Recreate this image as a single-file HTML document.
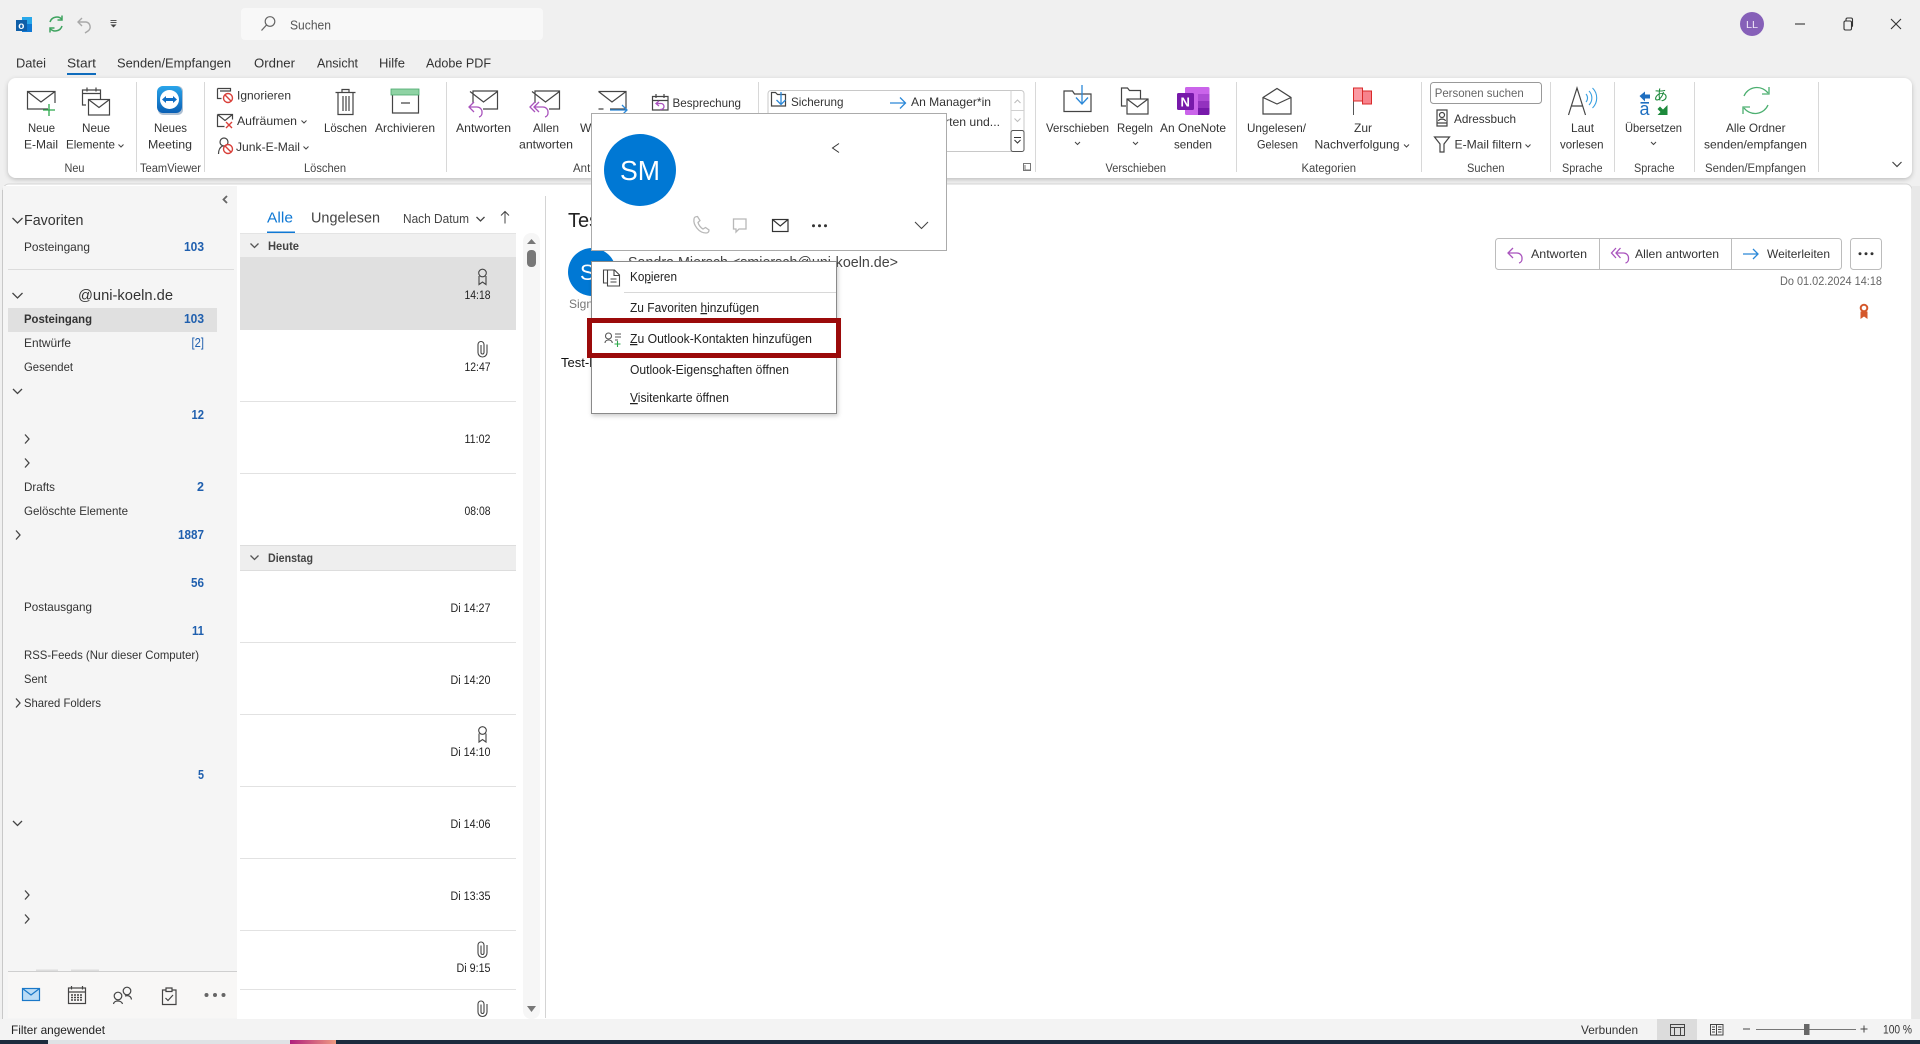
<!DOCTYPE html>
<html lang="de"><head><meta charset="utf-8"><title>Outlook</title>
<style>
html,body{margin:0;padding:0;width:1920px;height:1044px;overflow:hidden;background:#f0f0f0}
svg{display:block;font-family:"Liberation Sans","Noto Sans CJK JP",sans-serif;font-size:12px;fill:#333}
.i{fill:none;stroke:#444;stroke-width:1.2}
.b{fill:#1f5fae;font-weight:bold;font-size:12.5px}
.t{fill:#222;font-size:11.5px}
.h{fill:#444;font-weight:bold;font-size:12px}
.m{fill:#222;font-size:12.5px}
</style></head><body>
<svg xmlns="http://www.w3.org/2000/svg" width="1920" height="1044" viewBox="0 0 1920 1044">
<defs>
<linearGradient id="tv" x1="0" y1="0" x2="0" y2="1"><stop offset="0" stop-color="#2aa5ea"/><stop offset="1" stop-color="#0a5fb4"/></linearGradient>
<linearGradient id="pk" x1="0" y1="0" x2="1" y2="0"><stop offset="0" stop-color="#b0207e"/><stop offset="1" stop-color="#ef9a80"/></linearGradient>
<filter id="sh" x="-5%" y="-10%" width="110%" height="125%"><feDropShadow dx="0" dy="1.5" stdDeviation="2.5" flood-color="#000" flood-opacity=".22"/></filter>
<filter id="sm" x="-5%" y="-5%" width="110%" height="110%"><feDropShadow dx="1" dy="2" stdDeviation="2" flood-color="#000" flood-opacity=".2"/></filter>
</defs>

<!-- title bar -->
<rect x="22" y="17" width="10" height="15" fill="#28a8ea"/><rect x="22" y="24" width="10" height="8" fill="#0f78d4"/>
<rect x="16" y="20" width="11" height="11" fill="#0f5fa8"/><text x="18.3" y="29" style="font-size:10px;font-weight:bold;fill:#fff">o</text>
<g fill="none" stroke="#3ea35f" stroke-width="1.5"><path d="M50 22a7 7 0 0 1 12-2.5"/><path d="M62 26a7 7 0 0 1-12 2.5"/><path d="M62 15.5v4.5h-4.5"/><path d="M50 32.500v-4.500h4.500"/></g>
<g fill="none" stroke="#a8a8a8" stroke-width="1.4"><path d="M82 18l-4 4 4 4"/><path d="M78 22h8a5 5 0 0 1 2 9l-3 2"/></g>
<path d="M110.500 20.500h6M110.500 22.500h6" stroke="#555" stroke-width="1" fill="none"/><path d="M110.500 24.500l3 3 3-3z" fill="#444"/>
<rect x="241" y="8" width="302" height="32" rx="4" fill="#f8f8f8"/>
<circle cx="270" cy="21.500" r="4.800" fill="none" stroke="#666" stroke-width="1.200"/><path d="M266.500 25l-5 5.500" stroke="#666" stroke-width="1.300"/>
<text x="290" y="29.500" textLength="41" lengthAdjust="spacingAndGlyphs" style="font-size:12.5px;fill:#555">Suchen</text>
<circle cx="1752" cy="24" r="12" fill="#8660b8"/><text x="1746" y="28" textLength="12" lengthAdjust="spacingAndGlyphs" style="font-size:10px;fill:#f0e8f8">LL</text>
<path d="M1795 24h10" stroke="#333" stroke-width="1.100"/>
<g fill="none" stroke="#333" stroke-width="1.100"><rect x="1844" y="21" width="7.500" height="9" rx="1.500"/><path d="M1846 21v-1.500a1.500 1.500 0 0 1 1.500-1.500h3.500a1.500 1.500 0 0 1 1.500 1.500v6.500a1.500 1.500 0 0 1-1.500 1"/></g>
<path d="M1891 19l10 10M1901 19l-10 10" stroke="#333" stroke-width="1.100"/>

<!-- tabs -->
<g style="font-size:13px;fill:#333">
<text x="16" y="67.500" textLength="30" lengthAdjust="spacingAndGlyphs">Datei</text>
<text x="67" y="67.500" textLength="29" lengthAdjust="spacingAndGlyphs">Start</text>
<text x="117" y="67.500" textLength="114" lengthAdjust="spacingAndGlyphs">Senden/Empfangen</text>
<text x="254" y="67.500" textLength="41" lengthAdjust="spacingAndGlyphs">Ordner</text>
<text x="317" y="67.500" textLength="41" lengthAdjust="spacingAndGlyphs">Ansicht</text>
<text x="379" y="67.500" textLength="26" lengthAdjust="spacingAndGlyphs">Hilfe</text>
<text x="426" y="67.500" textLength="65" lengthAdjust="spacingAndGlyphs">Adobe PDF</text>
</g>
<rect x="67" y="73" width="29" height="2" fill="#0f6cbd"/>

<!-- main panel -->
<rect x="3" y="184" width="1909" height="860" rx="6" fill="#fff" stroke="#d6d6d6"/>
<rect x="3" y="186" width="234" height="833" fill="#f5f5f5"/>
<rect x="2" y="190" width="1" height="830" fill="#c8c8c8"/>
<rect x="237" y="186" width="3" height="833" fill="#fff"/>

<!-- ribbon -->
<rect x="8" y="78" width="1904" height="100" rx="8" fill="#fff" filter="url(#sh)"/>
<g fill="#d8d8d8">
<rect x="136" y="82" width="1" height="90"/><rect x="204" y="82" width="1" height="90"/><rect x="446" y="82" width="1" height="90"/><rect x="758" y="82" width="1" height="90"/><rect x="1035" y="82" width="1" height="90"/><rect x="1236" y="82" width="1" height="90"/><rect x="1421" y="82" width="1" height="90"/><rect x="1550" y="82" width="1" height="90"/><rect x="1614" y="82" width="1" height="90"/><rect x="1694" y="82" width="1" height="90"/><rect x="1818" y="82" width="1" height="90"/>
</g>

<!-- ribbon icons -->
<g class="i">
<path d="M48 109H27.500V91.500H55V103M27.500 91.500L41 102l14-10.500"/>
<path d="M86 105h-3.500V90h18v9M82.500 93.500h18M87 87.500v4M96 87.500v4"/>
<rect x="88.500" y="99.500" width="21" height="15.500" fill="#fff"/><path d="M88.500 99.500l10.500 8 10.500-8"/>
<path d="M338 92.500v22h15v-22M335.500 92.500h20M342 92.500v-3h7v3M343 96v15M346 96v15M349 96v15"/>
<path d="M392.500 95v18h26V95M401 103h9"/>
<path d="M473 103v-12H497.500v18H483M470 91.500l13.500 10.500 14-10.500" />
<path d="M535 103v-12H559.500v18H549M532 91.500l13.500 10.500 14-10.500" />
<path d="M598.500 91.500H626V109H610M598.500 109h5M598.500 91.500L612 102l14-10.500"/>
<path d="M652.500 96.500h15.500v13.500h-15.500zM652.500 100.500h15.500M656 94v4M664 94v4"/>
<path d="M217.500 88.500h13v3M217.500 88.500v10h4M220 91h10.500"/>
<path d="M217.500 114.500h15v5M217.500 114.500v12h7M217.500 114.500l7.500 6 7.500-6"/>
<circle cx="224" cy="142" r="4"/><path d="M218.500 154c0-5 2-7 4-8"/>
<path d="M771.500 92.500h4l2 2h8V106H771.500z" />
<path d="M1064.500 91h8l2 3h16.500v17.500h-27V91z"/>
<path d="M1126 106h-4.500V88h6l2 2.500h11v8"/>
<rect x="1127" y="99" width="21" height="15" fill="#fff"/><path d="M1127 99l10.500 8 10.500-8"/>
<path d="M1263 97.500L1277 88.500l14 9v16.500h-28zM1263 97.500l14 6.500 14-6.500"/>
<path d="M1437 110h10v16h-10zM1437 123h10"/><circle cx="1442" cy="115" r="2.500"/><path d="M1438.500 121c.5-2.500 6.500-2.500 7 0"/>
<path d="M1434.500 137h15l-5.500 7v8h-4v-8z"/>
<path d="M1568.500 115l8.500-27 8.500 27M1571.500 106h11"/>
</g>
<g fill="none" stroke="#2ba84a" stroke-width="1.300"><path d="M49 104v12M43 110h12"/></g>
<rect x="391" y="89" width="28" height="6" fill="#8fd3a4" stroke="#4aa96c" stroke-width=".8"/>
<!-- teamviewer -->
<rect x="158" y="86" width="25" height="29" rx="5" fill="#14497e" opacity=".35"/>
<rect x="157" y="86" width="25" height="27" rx="6" fill="url(#tv)"/>
<circle cx="169.500" cy="99.500" r="9.500" fill="#fff"/>
<path d="M162 99.500l4-3.500v2h7v-2l4 3.500-4 3.500v-2h-7v2z" fill="#0e6cc4"/>
<!-- purple arrows -->
<g fill="none" stroke="#a953bd" stroke-width="1.300">
<path d="M474 102l-5 5 5 5M469 107h8a5 5 0 0 1 5 5v1a4 4 0 0 1-3 4"/>
<path d="M535 102l-5 5 5 5M539 102l-5 5 5 5M534 107h9a5 5 0 0 1 5 5v1a4 4 0 0 1-3 4"/>
<path d="M659 106l-3-2.500 3-2.500M656 103.500h5a3 3 0 0 1 0 6h-1"/>
</g>
<path d="M610 110h17M622 105l5 5-5 5" fill="none" stroke="#2b88d8" stroke-width="1.300"/>
<path d="M781 92v12M776.500 100l4.500 4.500 4.500-4.500" fill="none" stroke="#2b88d8" stroke-width="1.300"/>
<path d="M890 103h15M900 97.500l5.500 5.500-5.500 5.500" fill="none" stroke="#2b88d8" stroke-width="1.300"/>
<path d="M1082 85v19M1076 97.500l6 6.500 6-6.500" fill="none" stroke="#2b88d8" stroke-width="1.300"/>
<!-- red no symbols -->
<g fill="none" stroke="#d9403a" stroke-width="1.400"><circle cx="228" cy="98" r="4.500"/><path d="M224.800 94.800l6.400 6.400"/><circle cx="228" cy="149" r="4.500"/><path d="M224.800 145.800l6.400 6.400"/><path d="M226 122l6 6M232 122l-6 6"/></g>
<!-- onenote -->
<rect x="1185" y="87" width="24.500" height="28" rx="1.500" fill="#ca64ea"/>
<rect x="1198" y="94" width="11.500" height="7" fill="#ae4bd5"/><rect x="1198" y="101" width="11.500" height="7" fill="#9332bf"/><path d="M1198 108h11.500v5.500a1.500 1.500 0 0 1-1.500 1.500h-10z" fill="#7719aa"/>
<rect x="1177" y="93" width="17" height="17" rx="1.500" fill="#7719aa"/>
<text x="1180.500" y="106.500" style="font-size:13px;font-weight:bold;fill:#fff">N</text>
<!-- flag -->
<path d="M1353.500 88v27" stroke="#555" stroke-width="1"/>
<rect x="1353.500" y="88" width="9" height="13" fill="#fb9aa3" stroke="#d92a2a"/>
<rect x="1362.500" y="91" width="9" height="13" fill="#f7828c" stroke="#d92a2a"/>
<!-- laut waves -->
<g fill="none" stroke="#3aa0e0" stroke-width="1.100"><path d="M1586 94a6 6 0 0 1 0 8"/><path d="M1589 91a10 10 0 0 1 0 14"/><path d="M1592.500 88a14 14 0 0 1 0 20"/></g>
<!-- translate -->
<path d="M1639.500 96l5.500-4.500v3h5v4h-5v3z" fill="#1f6fc0"/>
<text x="1653.500" y="100.500" style="font-size:14.500px;fill:#1e8a3c">あ</text>
<rect x="1640.500" y="102" width="8.500" height="1.600" fill="#1f6fc0"/>
<text x="1639.500" y="115" style="font-size:18px;fill:#1f6fc0">a</text>
<path d="M1667.500 105v10h-10l3-3-3-3 2.500-2.500 3 3z" fill="#1e8a3c"/>
<!-- sync big -->
<g fill="none" stroke="#4caf70" stroke-width="1.300"><path d="M1744 96a14 14 0 0 1 24-3"/><path d="M1768 105a14 14 0 0 1-24 3"/><path d="M1769 87v7h-7"/><path d="M1743 114v-7h7"/></g>

<!-- ribbon text -->
<g style="font-size:12px;fill:#333">
<text x="28" y="132" textLength="27" lengthAdjust="spacingAndGlyphs">Neue</text><text x="24" y="148.500" textLength="34" lengthAdjust="spacingAndGlyphs">E-Mail</text>
<text x="82" y="132" textLength="28" lengthAdjust="spacingAndGlyphs">Neue</text><text x="66" y="148.500" textLength="49" lengthAdjust="spacingAndGlyphs">Elemente</text>
<text x="154" y="132" textLength="33" lengthAdjust="spacingAndGlyphs">Neues</text><text x="148" y="148.500" textLength="44" lengthAdjust="spacingAndGlyphs">Meeting</text>
<text x="237" y="99.500" textLength="54" lengthAdjust="spacingAndGlyphs">Ignorieren</text>
<text x="237" y="125" textLength="60" lengthAdjust="spacingAndGlyphs">Aufräumen</text>
<text x="236" y="151" textLength="64" lengthAdjust="spacingAndGlyphs">Junk-E-Mail</text>
<text x="324" y="132" textLength="43" lengthAdjust="spacingAndGlyphs">Löschen</text>
<text x="375" y="132" textLength="60" lengthAdjust="spacingAndGlyphs">Archivieren</text>
<text x="456" y="132" textLength="55" lengthAdjust="spacingAndGlyphs">Antworten</text>
<text x="533" y="132" textLength="26" lengthAdjust="spacingAndGlyphs">Allen</text><text x="519" y="148.500" textLength="54" lengthAdjust="spacingAndGlyphs">antworten</text>
<text x="580" y="132">W</text>
<text x="672.500" y="107" textLength="68.500" lengthAdjust="spacingAndGlyphs">Besprechung</text>
<text x="791" y="106" textLength="52.500" lengthAdjust="spacingAndGlyphs">Sicherung</text>
<text x="911" y="106" textLength="80" lengthAdjust="spacingAndGlyphs">An Manager*in</text>
<text x="945" y="126" textLength="55" lengthAdjust="spacingAndGlyphs">rten und...</text>
<text x="1046" y="132" textLength="63" lengthAdjust="spacingAndGlyphs">Verschieben</text>
<text x="1117" y="132" textLength="36" lengthAdjust="spacingAndGlyphs">Regeln</text>
<text x="1160" y="132" textLength="66" lengthAdjust="spacingAndGlyphs">An OneNote</text><text x="1174" y="148.500" textLength="38" lengthAdjust="spacingAndGlyphs">senden</text>
<text x="1247" y="132" textLength="59" lengthAdjust="spacingAndGlyphs">Ungelesen/</text><text x="1257" y="148.500" textLength="41" lengthAdjust="spacingAndGlyphs">Gelesen</text>
<text x="1354" y="132" textLength="18" lengthAdjust="spacingAndGlyphs">Zur</text><text x="1314.500" y="148.500" textLength="85" lengthAdjust="spacingAndGlyphs">Nachverfolgung</text>
<text x="1454" y="123" textLength="62" lengthAdjust="spacingAndGlyphs">Adressbuch</text>
<text x="1454.500" y="148.500" textLength="67.500" lengthAdjust="spacingAndGlyphs">E-Mail filtern</text>
<text x="1571" y="132" textLength="23" lengthAdjust="spacingAndGlyphs">Laut</text><text x="1560" y="148.500" textLength="43.500" lengthAdjust="spacingAndGlyphs">vorlesen</text>
<text x="1625" y="132" textLength="57" lengthAdjust="spacingAndGlyphs">Übersetzen</text>
<text x="1726" y="132" textLength="59.500" lengthAdjust="spacingAndGlyphs">Alle Ordner</text><text x="1704" y="148.500" textLength="103" lengthAdjust="spacingAndGlyphs">senden/empfangen</text>
<g style="fill:#444;font-size:11.500px">
<text x="64.500" y="172" textLength="20" lengthAdjust="spacingAndGlyphs">Neu</text>
<text x="140" y="172" textLength="61" lengthAdjust="spacingAndGlyphs">TeamViewer</text>
<text x="304" y="172" textLength="42" lengthAdjust="spacingAndGlyphs">Löschen</text>
<text x="573" y="172">Ant</text>
<text x="1105.500" y="172" textLength="60.500" lengthAdjust="spacingAndGlyphs">Verschieben</text>
<text x="1301.500" y="172" textLength="54.500" lengthAdjust="spacingAndGlyphs">Kategorien</text>
<text x="1467" y="172" textLength="37.500" lengthAdjust="spacingAndGlyphs">Suchen</text>
<text x="1562" y="172" textLength="40.500" lengthAdjust="spacingAndGlyphs">Sprache</text>
<text x="1634" y="172" textLength="40.500" lengthAdjust="spacingAndGlyphs">Sprache</text>
<text x="1705" y="172" textLength="101" lengthAdjust="spacingAndGlyphs">Senden/Empfangen</text>
</g>
</g>
<!-- small chevrons -->
<g fill="none" stroke="#444" stroke-width="1">
<path d="M118.500 144.500l2.500 2.500 2.500-2.500M301.500 120.500l2.500 2.500 2.500-2.500M303.500 146.500l2.500 2.500 2.500-2.500M1075 142l2.500 2.500 2.500-2.500M1133 142l2.500 2.500 2.500-2.500M1404 144.500l2.500 2.500 2.500-2.500M1525.500 144.500l2.500 2.500 2.500-2.500M1651 142l2.500 2.500 2.500-2.500"/>
<path d="M1892.500 162l4.500 4.500 4.500-4.500" stroke-width="1.200"/>
<path d="M1025 165v5h5M1023.500 163.500h7v7h-7z" stroke="#777"/>
</g>
<!-- gallery -->
<rect x="768" y="90.500" width="256" height="61" rx="3" fill="none" stroke="#c8c8c8"/>
<path d="M1011 90.500v41M1011 110.500h13" stroke="#d0d0d0" fill="none"/>
<rect x="1011" y="130.500" width="13" height="21" rx="2" fill="#fff" stroke="#555"/>
<path d="M1014.500 103l3-3 3 3M1014.500 118.500l3 3 3-3" stroke="#bbb" fill="none"/>
<path d="M1014 137.500h7M1014.500 140l3 3 3-3" stroke="#333" fill="none"/>
<rect x="1430.500" y="82.500" width="111" height="21" rx="3" fill="#fff" stroke="#999"/>
<text x="1434.700" y="97" textLength="89" lengthAdjust="spacingAndGlyphs" style="font-size:12px;fill:#666">Personen suchen</text>

<!-- folder pane -->
<g style="fill:#333;font-size:12px">
<text x="24" y="225" textLength="59.500" lengthAdjust="spacingAndGlyphs" style="font-size:15px;fill:#333">Favoriten</text>
<text x="24" y="251" textLength="66" lengthAdjust="spacingAndGlyphs">Posteingang</text>
<rect x="8" y="269" width="226" height="1" fill="#dcdcdc"/>
<text x="78" y="300" textLength="95" lengthAdjust="spacingAndGlyphs" style="font-size:15px">@uni-koeln.de</text>
<rect x="8" y="308" width="209" height="24" fill="#e0e0e0"/>
<text x="24" y="323" textLength="68" lengthAdjust="spacingAndGlyphs" style="font-weight:bold">Posteingang</text>
<text x="24" y="347" textLength="47" lengthAdjust="spacingAndGlyphs">Entwürfe</text>
<text x="24" y="371" textLength="49" lengthAdjust="spacingAndGlyphs">Gesendet</text>
<text x="24" y="491" textLength="31" lengthAdjust="spacingAndGlyphs">Drafts</text>
<text x="24" y="515" textLength="104" lengthAdjust="spacingAndGlyphs">Gelöschte Elemente</text>
<text x="24" y="611" textLength="68" lengthAdjust="spacingAndGlyphs">Postausgang</text>
<text x="24" y="659" textLength="175" lengthAdjust="spacingAndGlyphs">RSS-Feeds (Nur dieser Computer)</text>
<text x="24" y="683" textLength="23" lengthAdjust="spacingAndGlyphs">Sent</text>
<text x="24" y="707" textLength="77" lengthAdjust="spacingAndGlyphs">Shared Folders</text>
</g>
<g class="b">
<text x="184" y="251" textLength="20" lengthAdjust="spacingAndGlyphs">103</text>
<text x="184" y="323" textLength="20" lengthAdjust="spacingAndGlyphs">103</text>
<text x="191.500" y="347" textLength="12.500" lengthAdjust="spacingAndGlyphs" style="font-weight:normal">[2]</text>
<text x="191.500" y="419" textLength="12.500" lengthAdjust="spacingAndGlyphs">12</text>
<text x="197" y="491">2</text>
<text x="178" y="539" textLength="26" lengthAdjust="spacingAndGlyphs">1887</text>
<text x="191" y="587" textLength="13" lengthAdjust="spacingAndGlyphs">56</text>
<text x="192" y="635" textLength="12" lengthAdjust="spacingAndGlyphs">11</text>
<text x="198" y="779" textLength="6" lengthAdjust="spacingAndGlyphs">5</text>
</g>
<g fill="none" stroke="#444" stroke-width="1.300">
<path d="M12.500 218l5 5 5-5M12.500 293l5 5 5-5M13 389l4.500 4.500 4.500-4.500M13 821l4.500 4.500 4.500-4.500"/>
<path d="M25 434.500l4 4.500-4 4.500M25 458.500l4 4.500-4 4.500M16 530.500l4 4.500-4 4.500M16 698.500l4 4.500-4 4.500M25 890.500l4 4.500-4 4.500M25 914.500l4 4.500-4 4.500"/>
<path d="M227 196l-3.500 3.500 3.500 3.500" stroke-width="1.800" stroke="#666"/>
</g>
<!-- nav bar -->
<rect x="8" y="971" width="229" height="47" fill="#f8f7f6"/>
<rect x="8" y="971" width="229" height="1" fill="#cfcfcf"/>
<rect x="36" y="969.500" width="22" height="1.500" fill="#ddd"/><rect x="71" y="969.500" width="28" height="1.500" fill="#ddd"/>
<rect x="22.500" y="988.500" width="17" height="12" fill="#bcdcf5" stroke="#1a78c8" stroke-width="1.200"/><path d="M22.500 988.500l8.500 6.500 8.500-6.500" fill="none" stroke="#1a78c8" stroke-width="1.200"/>
<g class="i" stroke-width="1"><rect x="68.500" y="988" width="17" height="15.500"/><path d="M68.500 992h17M71.500 986v3.500M82.500 986v3.500"/><path d="M71 995h12M71 997.500h12M71 1000h12" stroke-dasharray="2 1" stroke-width="1.600"/>
<circle cx="118" cy="996" r="3.800"/><path d="M113.500 1004c.5-4 8-4 9 0"/><circle cx="127" cy="991" r="3.800"/><path d="M125 996c3-1 6 0 6.500 3.500"/>
<path d="M166 990h-3.500v14.500h13.500V990h-3.500M166 988h6v3.500h-6zM165.500 998l2.500 2.500 5-5.500"/></g>
<g fill="#666"><circle cx="206.500" cy="995" r="2"/><circle cx="215" cy="995" r="2"/><circle cx="223.500" cy="995" r="2"/></g>

<!-- message list -->
<text x="267" y="222.500" textLength="26" lengthAdjust="spacingAndGlyphs" style="font-size:15px;fill:#0f78d4">Alle</text>
<rect x="267" y="231.500" width="28" height="1.500" fill="#0f78d4"/>
<text x="311" y="222.500" textLength="69" lengthAdjust="spacingAndGlyphs" style="font-size:15px;fill:#444">Ungelesen</text>
<text x="403" y="223" textLength="66" lengthAdjust="spacingAndGlyphs" style="font-size:12.500px;fill:#444">Nach Datum</text>
<path d="M476.500 217l4 4 4-4" fill="none" stroke="#444" stroke-width="1.300"/>
<path d="M505 223.500v-12M501 215.500l4-4 4 4" fill="none" stroke="#444"/>
<rect x="240" y="233" width="276" height="24" fill="#f0f0f0"/><rect x="240" y="233" width="276" height="1" fill="#e4e4e4"/>
<rect x="240" y="257" width="276" height="73" fill="#e0e0e0"/>
<text x="268" y="250" textLength="31" lengthAdjust="spacingAndGlyphs" class="h">Heute</text>
<path d="M250.500 243.500l4 4 4-4" fill="none" stroke="#555" stroke-width="1.300"/>
<g fill="#e2e2e2"><rect x="240" y="401" width="276" height="1"/><rect x="240" y="473" width="276" height="1"/><rect x="240" y="642" width="276" height="1"/><rect x="240" y="714" width="276" height="1"/><rect x="240" y="786" width="276" height="1"/><rect x="240" y="858" width="276" height="1"/><rect x="240" y="930" width="276" height="1"/><rect x="240" y="989" width="276" height="1"/></g>
<rect x="240" y="545" width="276" height="26" fill="#eee"/><rect x="240" y="545" width="276" height="1" fill="#ddd"/><rect x="240" y="570" width="276" height="1" fill="#ddd"/>
<text x="268" y="562" textLength="45" lengthAdjust="spacingAndGlyphs" class="h">Dienstag</text>
<path d="M250.500 555.500l4 4 4-4" fill="none" stroke="#555" stroke-width="1.300"/>
<g class="t">
<text x="464.500" y="299" textLength="26" lengthAdjust="spacingAndGlyphs">14:18</text>
<text x="464.500" y="371" textLength="26" lengthAdjust="spacingAndGlyphs">12:47</text>
<text x="464.500" y="443" textLength="26" lengthAdjust="spacingAndGlyphs">11:02</text>
<text x="464.500" y="515" textLength="26" lengthAdjust="spacingAndGlyphs">08:08</text>
<text x="450.500" y="612" textLength="40" lengthAdjust="spacingAndGlyphs">Di 14:27</text>
<text x="450.500" y="684" textLength="40" lengthAdjust="spacingAndGlyphs">Di 14:20</text>
<text x="450.500" y="756" textLength="40" lengthAdjust="spacingAndGlyphs">Di 14:10</text>
<text x="450.500" y="828" textLength="40" lengthAdjust="spacingAndGlyphs">Di 14:06</text>
<text x="450.500" y="900" textLength="40" lengthAdjust="spacingAndGlyphs">Di 13:35</text>
<text x="456.500" y="972" textLength="34" lengthAdjust="spacingAndGlyphs">Di 9:15</text>
</g>
<!-- ribbons / clips -->
<g fill="none" stroke="#444" stroke-width="1.100">
<circle cx="482.500" cy="273" r="3.800"/><path d="M479 276v8.500l3.500-2.500 3.500 2.500V276"/>
<circle cx="482.500" cy="730.500" r="3.800"/><path d="M479 733.500v8.500l3.500-2.500 3.500 2.500v-8.500"/>
<path d="M481 345v7.500a1.500 1.500 0 0 0 3 0v-8a3 3 0 0 0-6 0v8a4.500 4.500 0 0 0 9 0v-8"/>
<path d="M481 945.500v7.500a1.500 1.500 0 0 0 3 0v-8a3 3 0 0 0-6 0v8a4.500 4.500 0 0 0 9 0v-8"/>
<path d="M481 1004.500v7.500a1.500 1.500 0 0 0 3 0v-8a3 3 0 0 0-6 0v8a4.500 4.500 0 0 0 9 0v-8"/>
</g>
<!-- scrollbar -->
<rect x="523" y="233" width="17" height="786" rx="8" fill="#f6f6f6"/>
<path d="M527 244l4.500-5 4.500 5z" fill="#777"/><path d="M527 1006h9l-4.500 6z" fill="#777"/>
<rect x="527" y="250" width="9" height="17" rx="4" fill="#777"/>
<rect x="545" y="196" width="1" height="822" fill="#d4d4d4"/>

<!-- reading pane -->
<text x="568" y="227" style="font-size:20px;fill:#222">Test</text>
<circle cx="592" cy="272" r="24" fill="#0078d4"/><text x="580" y="280" style="font-size:22px;fill:#fff">SM</text>
<text x="569" y="308" style="font-size:12px;fill:#777">Signiert</text>
<text x="628" y="267" textLength="270" lengthAdjust="spacingAndGlyphs" style="font-size:14.500px;fill:#444">Sandra Miersch &lt;smiersch@uni-koeln.de&gt;</text>
<text x="561" y="367" style="font-size:13px;fill:#111">Test-Mail</text>
<!-- reply buttons -->
<rect x="1495.500" y="238.500" width="346" height="31" rx="3" fill="#fff" stroke="#bcbcbc"/>
<path d="M1599.500 238.500v31M1731.500 238.500v31" stroke="#bcbcbc"/>
<rect x="1850.500" y="238.500" width="31" height="31" rx="3" fill="#fff" stroke="#bcbcbc"/>
<g fill="none" stroke="#a953bd" stroke-width="1.300">
<path d="M1513 248l-5 5 5 5M1508 253h9a5 5 0 0 1 5 5v1a4 4 0 0 1-3 4"/>
<path d="M1616 248l-4.500 5 4.500 5M1620.500 248l-4.500 5 4.500 5M1616 253h7.500a5 5 0 0 1 5 5v1a4 4 0 0 1-3 4"/>
</g>
<path d="M1743 254h15M1753 249l5 5-5 5" fill="none" stroke="#2b88d8" stroke-width="1.300"/>
<g style="font-size:12px;fill:#333">
<text x="1531" y="258" textLength="56" lengthAdjust="spacingAndGlyphs">Antworten</text>
<text x="1635" y="258" textLength="84" lengthAdjust="spacingAndGlyphs">Allen antworten</text>
<text x="1767" y="258" textLength="63" lengthAdjust="spacingAndGlyphs">Weiterleiten</text>
</g>
<g fill="#333"><circle cx="1860" cy="253.700" r="1.500"/><circle cx="1866" cy="253.700" r="1.500"/><circle cx="1872" cy="253.700" r="1.500"/></g>
<text x="1780" y="285" textLength="102" lengthAdjust="spacingAndGlyphs" style="font-size:12px;fill:#666">Do 01.02.2024 14:18</text>
<circle cx="1864" cy="308" r="3.300" fill="none" stroke="#d4572a" stroke-width="2"/>
<path d="M1860.500 311.500v7.500l3.500-2.500 3.500 2.500v-7.500z" fill="#d4572a"/>

<!-- contact card -->
<rect x="591.500" y="113.500" width="355" height="137" fill="#fff" stroke="#ababab"/>
<circle cx="640" cy="170" r="36" fill="#0078d4"/>
<text x="620" y="180" textLength="40" lengthAdjust="spacingAndGlyphs" style="font-size:28px;fill:#fff">SM</text>
<path d="M839 143.500l-6.500 4.500 6.500 4.500" fill="none" stroke="#333"/>
<g fill="none" stroke="#b8b8b8" stroke-width="1.300">
<path d="M694 219c-1 6 5 14 12 14 2 0 3-1 3-3l-3.500-2.500-2.500 1.500c-2-1-4.500-4-5-6.500l2-2-2.500-4c-2 0-3.500 1-3.500 2.500z"/>
<path d="M733.500 219h12.500v10h-7l-3 3v-3h-2.500z"/>
</g>
<rect x="772.500" y="219.500" width="15.500" height="12" fill="none" stroke="#333" stroke-width="1.200"/><path d="M772.500 219.500l7.750 6.500 7.750-6.500" fill="none" stroke="#333" stroke-width="1.200"/>
<g fill="#333"><circle cx="813.500" cy="225.700" r="1.500"/><circle cx="819.500" cy="225.700" r="1.500"/><circle cx="825.500" cy="225.700" r="1.500"/></g>
<path d="M915 222l6.500 6.500 6.500-6.500" fill="none" stroke="#444" stroke-width="1.100"/>

<!-- context menu -->
<rect x="591.500" y="261.500" width="245" height="152" fill="#fff" stroke="#8a8a8a" filter="url(#sm)"/>
<rect x="624" y="292" width="212" height="1" fill="#d8d8d8"/>
<g fill="none" stroke="#444" stroke-width="1.100"><path d="M607 270h-3.500v13h4M607.500 270h7l5 5v11h-12zM614 270v5.500h5.500M610.500 279h6M610.500 282h6"/></g>
<g fill="none" stroke="#555" stroke-width="1.100"><circle cx="608.500" cy="336" r="3"/><path d="M605 343c.2-4 7-4 7.300 0M615 334h6M615 337h6M615 340h3"/></g>
<path d="M617.500 341v6M614.500 344h6" stroke="#2ba84a" stroke-width="1.100" fill="none"/>
<g class="m">
<text x="630" y="281" textLength="47" lengthAdjust="spacingAndGlyphs">Ko<tspan text-decoration="underline">p</tspan>ieren</text>
<text x="630" y="312" textLength="129" lengthAdjust="spacingAndGlyphs">Zu Favoriten <tspan text-decoration="underline">h</tspan>inzufügen</text>
<text x="630" y="343" textLength="182" lengthAdjust="spacingAndGlyphs"><tspan text-decoration="underline">Z</tspan>u Outlook-Kontakten hinzufügen</text>
<text x="630" y="374" textLength="159" lengthAdjust="spacingAndGlyphs">Outlook-Eigens<tspan text-decoration="underline">c</tspan>haften öffnen</text>
<text x="630" y="402" textLength="99" lengthAdjust="spacingAndGlyphs"><tspan text-decoration="underline">V</tspan>isitenkarte öffnen</text>
</g>
<rect x="589.500" y="320.500" width="249" height="35" fill="none" stroke="#9b0a0a" stroke-width="5"/>

<!-- status bar -->
<rect x="0" y="1019" width="1920" height="21" fill="#f3f3f3"/>
<text x="11" y="1034" textLength="94" lengthAdjust="spacingAndGlyphs" style="font-size:12px;fill:#222">Filter angewendet</text>
<text x="1581" y="1034" textLength="57" lengthAdjust="spacingAndGlyphs" style="font-size:12px;fill:#333">Verbunden</text>
<rect x="1657" y="1019" width="40" height="21" fill="#dcdcdc"/>
<g fill="none" stroke="#444"><rect x="1670.500" y="1024.500" width="14" height="11"/><path d="M1670.500 1027.500h14M1674.500 1027.500v8M1680.500 1027.500v8"/>
<path d="M1710.500 1024.500h6v10.500h-6zM1716.500 1024.500h6.500v10.500h-6.500zM1712 1027h3M1712 1029.500h3M1712 1032h3M1718 1027h3.500M1718 1029.500h3.500M1718 1032h3.500"/>
<path d="M1743 1029h7M1860.500 1029h7M1864 1025.500v7"/></g>
<rect x="1756" y="1029" width="100" height="1" fill="#777"/>
<rect x="1804" y="1024" width="5.500" height="11" fill="#666"/>
<text x="1883" y="1033.500" textLength="29" lengthAdjust="spacingAndGlyphs" style="font-size:11.500px;fill:#333">100 %</text>
<rect x="1912" y="186" width="8" height="833" fill="#e8e8e8"/>

<!-- taskbar sliver -->
<rect x="0" y="1040" width="1920" height="4" fill="#1c2b3d"/>
<rect x="48" y="1040" width="242" height="4" fill="#dfe2e5"/>
<rect x="290" y="1040" width="46" height="4" fill="url(#pk)"/>
</svg>
</body></html>
